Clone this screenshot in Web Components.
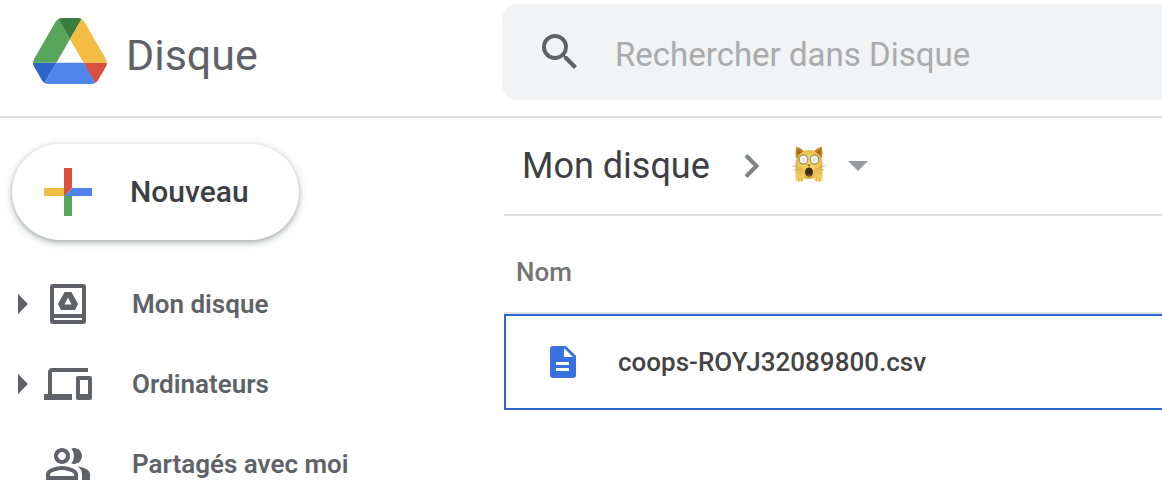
<!DOCTYPE html>
<html lang="fr">
<head>
<meta charset="utf-8">
<title>Disque</title>
<style>
  body {
    margin: 0;
    background: #fff;
    color: #5f6368;
    font-family: Roboto, "Liberation Sans", sans-serif;
    font-size: 26px;
    line-height: 32px;
    --display: Roboto, "Liberation Sans", sans-serif;
    --rule: #dadce0;
    --side: 502px;
  }
</style>
</head>
<body>
<drive-app></drive-app>

<template id="drive-app">
  <style>
    :host { display: block; overflow: hidden; }
    header { display: grid; grid-template-columns: var(--side) 1fr; height: 116px; border-bottom: 2px solid var(--rule); }
    .body { display: grid; grid-template-columns: var(--side) 1fr; }
    aside { padding: 26px 12px 0; }
    nav { padding-top: 24px; }
    main { padding-left: 2px; min-width: 0; }
  </style>
  <header>
    <drive-brand>Disque</drive-brand>
    <drive-search></drive-search>
  </header>
  <div class="body">
    <aside>
      <new-button>Nouveau</new-button>
      <nav aria-label="Navigation">
        <nav-item expandable>
          <svg slot="icon" width="48" height="48" viewBox="0 0 24 24" fill="currentColor" fill-rule="evenodd" aria-hidden="true"><path d="M4.5 2h15A1.5 1.5 0 0 1 21 3.500v17a1.500 1.500 0 0 1-1.500 1.500h-15A1.500 1.500 0 0 1 3 20.500v-17A1.500 1.500 0 0 1 4.500 2zM5 4v13h14V4zM5 19v1h14v-1z"/><path d="M10.300 6h3.400l3.300 6-1.500 3h-7L7 12zM12 8.900L10.200 12.300h3.600z"/></svg>
          Mon disque
        </nav-item>
        <nav-item expandable>
          <svg slot="icon" width="48" height="48" viewBox="0 0 24 24" fill="currentColor" aria-hidden="true"><path d="M4 6h18V4H4c-1.100 0-2 .9-2 2v11H0v3h14v-3H4V6zm19 2h-6c-.55 0-1 .45-1 1v10c0 .55.45 1 1 1h6c.55 0 1-.45 1-1V9c0-.55-.45-1-1-1zm-1 9h-4v-7h4v7z"/></svg>
          Ordinateurs
        </nav-item>
        <nav-item>
          <svg slot="icon" width="48" height="48" viewBox="0 0 24 24" fill="currentColor" aria-hidden="true"><path d="M9 12c2.210 0 4-1.790 4-4s-1.790-4-4-4-4 1.790-4 4 1.790 4 4 4zm0-6c1.100 0 2 .9 2 2s-.9 2-2 2-2-.9-2-2 .9-2 2-2zM9 13c-2.670 0-8 1.340-8 4v3h16v-3c0-2.660-5.330-4-8-4zm6 5H3v-.99C3.200 16.290 6.300 15 9 15s5.800 1.290 6 2v1zM15 12c2.210 0 4-1.790 4-4s-1.790-4-4-4c-.47 0-.91.1-1.330.24a5.980 5.980 0 0 1 0 7.520c.42.14.86.24 1.330.24zM16.670 13.130C18.040 14.060 19 15.320 19 17v3h4v-3c0-2.180-3.570-3.470-6.330-3.870z"/></svg>
          Partagés avec moi
        </nav-item>
      </nav>
    </aside>
    <main>
      <drive-path>Mon disque</drive-path>
      <file-list></file-list>
    </main>
  </div>
</template>

<template id="drive-brand">
  <style>
    :host { display: block; }
    a { display: flex; align-items: center; gap: 19px; height: 102px; padding-left: 33px; color: inherit; text-decoration: none; }
    span { font: 400 43px/56px var(--display); padding-top: 8px; }
  </style>
  <a href="#">
    <svg width="74" height="66" viewBox="0 0 87.300 78" aria-hidden="true">
      <path fill="#2c66cb" d="m6.600 66.850 3.850 6.650c.8 1.400 1.950 2.500 3.300 3.300l13.750-23.800h-27.500c0 1.550.4 3.100 1.200 4.500z"/>
      <path fill="#58a55c" d="m43.650 25-13.750-23.800c-1.350.8-2.500 1.900-3.300 3.300l-25.400 44a9.060 9.060 0 0 0 -1.200 4.500h27.500z"/>
      <path fill="#d85140" d="m73.550 76.800c1.350-.8 2.500-1.900 3.300-3.300l1.600-2.750 7.650-13.250c.8-1.400 1.200-2.950 1.200-4.500h-27.500l5.850 11.500z"/>
      <path fill="#3a7c3d" d="m43.650 25 13.750-23.800c-1.350-.8-2.900-1.200-4.500-1.200h-18.500c-1.600 0-3.150.45-4.500 1.200z"/>
      <path fill="#5086ec" d="m59.800 53h-32.300l-13.750 23.800c1.350.8 2.900 1.200 4.500 1.200h50.800c1.600 0 3.150-.45 4.500-1.200z"/>
      <path fill="#f3bc43" d="m73.400 26.500-12.700-22c-.8-1.400-1.950-2.500-3.300-3.300l-13.750 23.800 16.150 28h27.450c0-1.550-.4-3.100-1.200-4.500z"/>
    </svg>
    <span><slot></slot></span>
  </a>
</template>

<template id="drive-search">
  <style>
    :host { display: block; padding-top: 4px; min-width: 0; }
    form { display: flex; align-items: center; gap: 31px; height: 96px; padding-left: 34px; background: #f1f3f4; border-radius: 16px 0 0 16px; }
    button { display: flex; flex: none; padding: 0; border: 0; background: none; color: #5f6368; }
    input { flex: 1; min-width: 0; height: 48px; padding: 4px 0 0; border: 0; outline: 0; background: none; color: #3c4043; font: 400 33px/40px var(--display); }
    input::placeholder { color: #a9abad; opacity: 1; }
  </style>
  <form role="search">
    <button type="button" aria-label="Rechercher"><svg width="48" height="48" viewBox="0 0 24 24" fill="currentColor" aria-hidden="true"><path d="M15.500 14h-.79l-.28-.27A6.471 6.471 0 0 0 16 9.500 6.500 6.500 0 1 0 9.500 16c1.610 0 3.090-.59 4.230-1.570l.27.28v.79l5 4.990L20.490 19l-4.990-5zm-6 0C7.010 14 5 11.990 5 9.500S7.010 5 9.500 5 14 7.010 14 9.500 11.990 14 9.500 14z"/></svg></button>
    <input type="text" aria-label="Rechercher dans Disque" placeholder="Rechercher dans Disque">
  </form>
</template>

<template id="new-button">
  <style>
    :host { display: block; }
    button { display: flex; align-items: center; gap: 26px; height: 96px; padding: 0 50px 0 20px; border: 0; border-radius: 48px; background: #fff; box-shadow: 0 2px 4px rgba(60,64,67,.3), 0 2px 8px 1px rgba(60,64,67,.2); color: #3c4043; font: 500 30px/40px var(--display); }
  </style>
  <button type="button">
    <svg width="72" height="72" viewBox="0 0 36 36" aria-hidden="true"><path fill="#58a55c" d="M16 16v14h4V20z"/><path fill="#5086ec" d="M30 16H20l-4 4h14z"/><path fill="#f3bc43" d="M6 16v4h10l4-4z"/><path fill="#d85140" d="M20 16V6h-4v14z"/></svg>
    <span><slot></slot></span>
  </button>
</template>

<template id="nav-item">
  <style>
    :host { display: block; }
    a { display: flex; align-items: center; height: 80px; padding-left: 6px; color: inherit; font-weight: 600; text-decoration: none; }
    .arrow { width: 10px; height: 20px; margin-right: 16px; visibility: hidden; }
    :host([expandable]) .arrow { visibility: visible; }
    .icon { display: flex; width: 48px; margin-right: 40px; }
  </style>
  <a href="#">
    <svg class="arrow" viewBox="0 0 10 20" fill="currentColor" aria-hidden="true"><path d="M0 0l10 10L0 20z"/></svg>
    <span class="icon"><slot name="icon"></slot></span>
    <span><slot></slot></span>
  </a>
</template>

<template id="drive-path">
  <style>
    :host { display: flex; align-items: center; height: 96px; padding-left: 18px; border-bottom: 2px solid var(--rule); color: #3c4043; font: 400 36px/48px var(--display); }
    .chevron { margin: 0 32px 0 34px; }
    button { display: flex; align-items: center; gap: 22px; padding: 0; border: 0; background: none; }
    .cat { padding-bottom: 4px; }
    a { color: inherit; text-decoration: none; }
  </style>
  <a href="#"><slot></slot></a>
  <svg class="chevron" width="16" height="24" viewBox="0 0 16 24" fill="none" stroke="#808386" stroke-width="4" aria-hidden="true"><path d="M2 1.500L12.500 12 2 22.500"/></svg>
  <button type="button" aria-label="Dossier chat effrayé">
    <svg class="cat" width="34" height="36" viewBox="0 0 34 36" aria-hidden="true">
      <defs>
        <radialGradient id="fur" cx=".5" cy=".45" r=".6"><stop offset="0" stop-color="#f9dc6c"/><stop offset=".65" stop-color="#f0c552"/><stop offset="1" stop-color="#d09a32"/></radialGradient>
        <linearGradient id="paw" x2="0" y2="1"><stop offset="0" stop-color="#dfad3f"/><stop offset="1" stop-color="#f6da78"/></linearGradient>
      </defs>
      <path fill="#c58a2c" d="M4 12Q3 5 4.500 0.500Q9 2 13 6L21 6Q25 2 29.500 0.500Q31 5 30 12z"/>
      <path fill="#a0641f" d="M5.500 9V3l5 4zM28.500 9V3l-5 4z"/>
      <ellipse cx="17" cy="18.500" rx="13.500" ry="14.500" fill="url(#fur)"/>
      <path d="M1 20l5 1M2 24l4-1M33 20l-5 1M32 24l-4-1" stroke="#b09870" stroke-width=".7"/>
      <g fill="#fff" stroke="#a8956a" stroke-width="1.300"><ellipse cx="11.500" cy="13.500" rx="4.200" ry="4.500"/><ellipse cx="22.500" cy="13.500" rx="4.200" ry="4.500"/></g>
      <g fill="#e6e4e2"><ellipse cx="11.500" cy="13.500" rx="2.200" ry="2.600"/><ellipse cx="22.500" cy="13.500" rx="2.200" ry="2.600"/></g>
      <path fill="#94602e" d="M15 18.500q2-.6 4 0L17 21z"/>
      <ellipse cx="17" cy="26" rx="4" ry="4.600" fill="#3c2a24"/>
      <path fill="#74493c" d="M14.500 29q2.500-1.800 5 0-1 1.600-2.500 1.600T14.500 29z"/>
      <g fill="url(#paw)"><path d="M3.500 34V25c0-5 2-6 3.500-3 2-1 5 1 5 4v7c0 2-2 3-3 2-2 1-5 1-5.500-1z"/><path d="M30.500 34V25c0-5-2-6-3.500-3-2-1-5 1-5 4v7c0 2 2 3 3 2 2 1 5 1 5.500-1z"/></g>
      <path d="M6.500 31.500v4M9.300 31.500v4M24.700 31.500v4M27.500 31.500v4" stroke="#cf9f40" stroke-width=".7"/>
    </svg>
    <svg width="20" height="10" viewBox="0 0 20 10" aria-hidden="true"><path fill="#9a9b9e" d="M0 0h20L10 10z"/></svg>
  </button>
</template>

<template id="file-list">
  <style>
    :host { display: block; }
    table { width: 100%; border-collapse: separate; border-spacing: 0; }
    th, td { padding: 0; text-align: left; font-weight: 500; }
    th { box-sizing: border-box; height: 98px; padding: 16px 0 0 12px; border-bottom: 2px solid #e0e0e0; color: #757575; }
    td { height: 92px; border: solid #2c66cb; border-width: 2px 0 2px 2px; color: #444; }
    .file { display: flex; align-items: center; gap: 42px; padding-left: 44px; }
  </style>
  <table>
    <thead><tr><th scope="col">Nom</th></tr></thead>
    <tbody><tr><td><div class="file">
      <svg width="26" height="32" viewBox="0 0 26 32" aria-hidden="true"><path fill="#3871e0" d="M3 0h13l10 10v19a3 3 0 0 1-3 3H3a3 3 0 0 1-3-3V3a3 3 0 0 1 3-3z"/><path fill="#fff" d="M14 2v9h9zM6 16h13v3H6zM6 22h13v3H6z"/></svg>
      <span>coops-ROYJ32089800.csv</span>
    </div></td></tr></tbody>
  </table>
</template>

<script>
  class TemplateElement extends HTMLElement {
    constructor() {
      super();
      const template = document.getElementById(this.localName);
      this.attachShadow({ mode: "open" }).append(template.content.cloneNode(true));
    }
  }
  customElements.define("drive-brand", class extends TemplateElement {});
  customElements.define("drive-search", class extends TemplateElement {});
  customElements.define("new-button", class extends TemplateElement {});
  customElements.define("nav-item", class extends TemplateElement {});
  customElements.define("drive-path", class extends TemplateElement {});
  customElements.define("file-list", class extends TemplateElement {});
  customElements.define("drive-app", class extends TemplateElement {});
</script>
</body>
</html>
